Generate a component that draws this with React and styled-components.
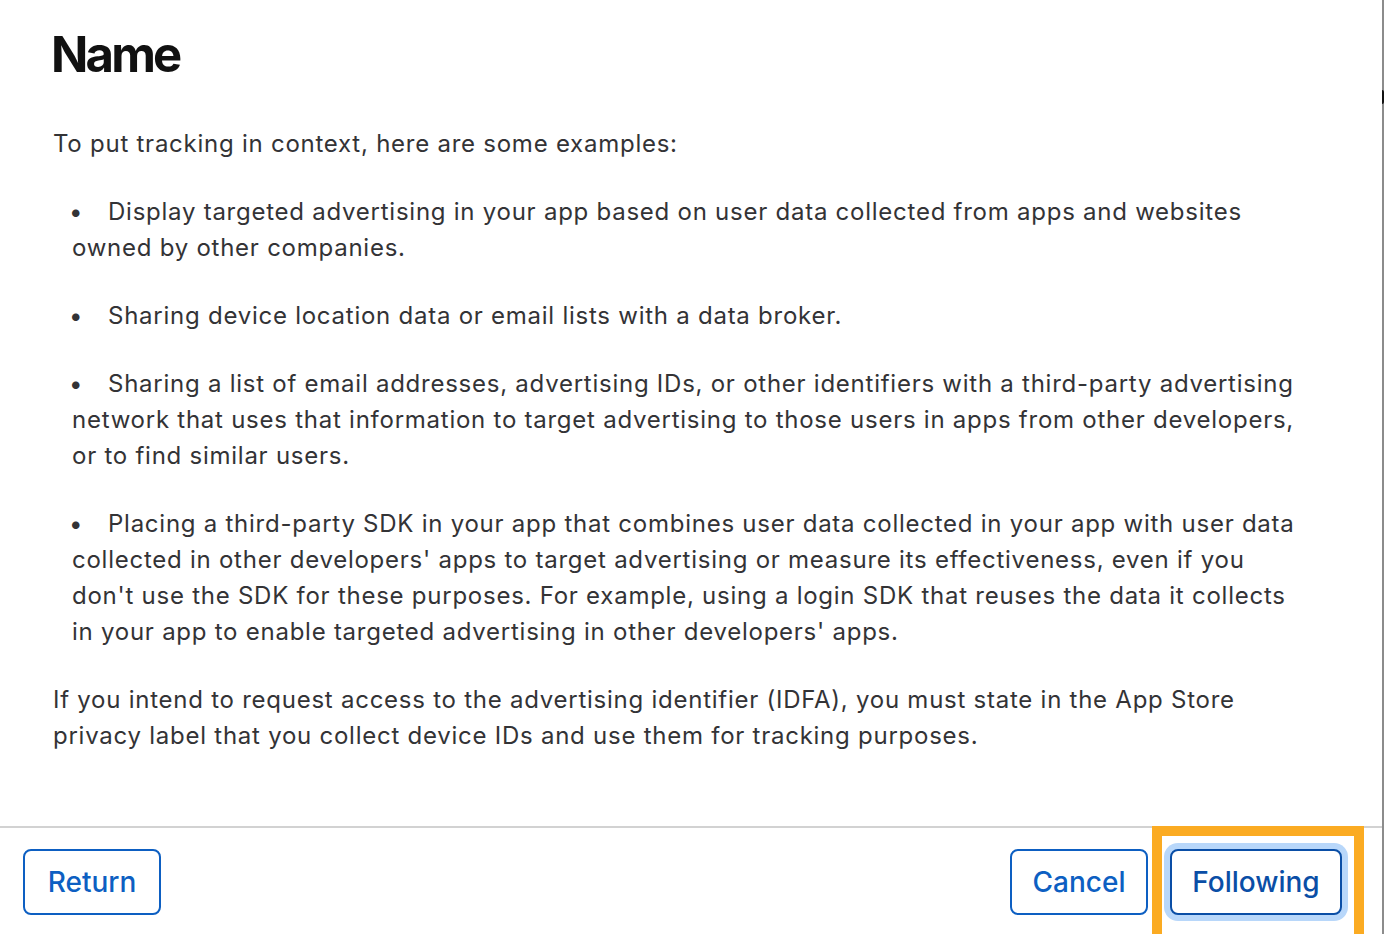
import React from "react";
import styled, { createGlobalStyle } from "styled-components";

const Global = createGlobalStyle`
  html, body { margin: 0; padding: 0; background: #ffffff; }
  body { font-family: Inter, "Noto Sans", "Liberation Sans", sans-serif; -webkit-font-smoothing: antialiased; }
  #root { height: 934px; }
`;

const Frame = styled.div`
  width: 1384px;
  height: 934px;
  display: flex;
  overflow: hidden;
  background: #ffffff;
`;

const Panel = styled.div`
  flex: 0 0 1382px;
  height: 934px;
  display: flex;
  flex-direction: column;
  background: #ffffff;
  border-bottom-right-radius: 8px;
  overflow: hidden;
`;

const EdgeBar = styled.div`
  flex: 1;
  background: #8c8c8c;
  position: relative;
`;

const EdgeMark = styled.div`
  position: absolute;
  top: 90px;
  left: 0;
  width: 2px;
  height: 14px;
  background: #111;
  border-radius: 0 2px 2px 0;
`;

const Content = styled.main`
  flex: 1;
  padding: 25px 72px 0 53px;
  color: #333336;
`;

const Title = styled.h1`
  margin: 0 0 41px -2px;
  font-size: 49px;
  line-height: 60px;
  font-weight: 700;
  letter-spacing: -2.8px;
  color: #111111;
`;

const Para = styled.p`
  margin: 0 0 32px;
  font-size: 24px;
  line-height: 36px;
  font-weight: 400;
  letter-spacing: 0.75px;
`;

const List = styled.ul`
  margin: 0 0 32px;
  padding: 0 0 0 19px;
  list-style: none;
  display: flex;
  flex-direction: column;
  gap: 32px;
`;

const Item = styled.li`
  font-size: 24px;
  line-height: 36px;
  letter-spacing: 0.75px;

  &::before {
    content: "•";
    display: inline-block;
    width: 39px;
    margin-left: -3px;
  }
`;

const Footer = styled.footer`
  flex: 0 0 auto;
  height: 108px;
  border-top: 2px solid #d2d2d2;
  box-sizing: border-box;
  display: flex;
  align-items: flex-start;
  padding: 21px 40px 0 23px;
`;

const Spacer = styled.div`
  flex: 1;
`;

const Button = styled.button`
  height: 66px;
  min-width: ${(p) => p.$w}px;
  box-sizing: border-box;
  border: 2px solid ${(p) => (p.$focus ? "#0a4ea6" : "#0d5fc2")};
  border-radius: 8px;
  background: #ffffff;
  color: ${(p) => (p.$focus ? "#0a4ea6" : "#0d5fc2")};
  font-family: Inter, "Noto Sans", "Liberation Sans", sans-serif;
  font-size: 28px;
  font-weight: 500;
  padding: 0 20px;
  box-shadow: ${(p) => (p.$focus ? "0 0 0 6px #b8d7fa" : "none")};
  cursor: pointer;
`;

const Highlight = styled.div`
  position: relative;
  margin-left: 22px;
  display: flex;
`;

const HighlightBox = styled.div`
  position: absolute;
  top: -23px;
  left: -18px;
  right: -22px;
  bottom: -30px;
  border: 10px solid #fbab22;
  pointer-events: none;
`;

export default function App() {
  return (
    <>
      <Global />
      <Frame>
        <Panel>
          <Content>
            <Title>Name</Title>
            <Para>To put tracking in context, here are some examples:</Para>
            <List>
              <Item>
                Display targeted advertising in your app based on user data collected from apps and websites owned by other companies.
              </Item>
              <Item>
                Sharing device location data or email lists with a data broker.
              </Item>
              <Item>
                Sharing a list of email addresses, advertising IDs, or other identifiers with a third-party advertising network that uses that information to target advertising to those users in apps from other developers, or to find similar users.
              </Item>
              <Item>
                Placing a third-party SDK in your app that combines user data collected in your app with user data collected in other developers' apps to target advertising or measure its effectiveness, even if you don't use the SDK for these purposes. For example, using a login SDK that reuses the data it collects in your app to enable targeted advertising in other developers' apps.
              </Item>
            </List>
            <Para>
              If you intend to request access to the advertising identifier (IDFA), you must state in the App Store privacy label that you collect device IDs and use them for tracking purposes.
            </Para>
          </Content>
          <Footer>
            <Button $w={138}>Return</Button>
            <Spacer />
            <Button $w={138}>Cancel</Button>
            <Highlight>
              <HighlightBox />
              <Button $w={172} $focus>Following</Button>
            </Highlight>
          </Footer>
        </Panel>
        <EdgeBar>
          <EdgeMark />
        </EdgeBar>
      </Frame>
    </>
  );
}
